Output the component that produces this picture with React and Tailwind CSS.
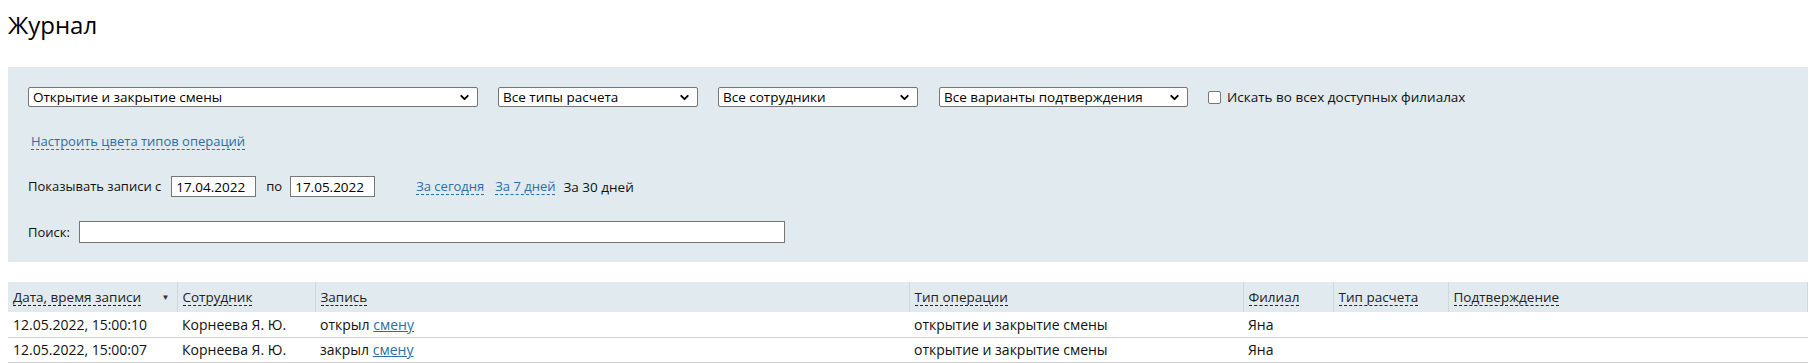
import { ChevronDown } from 'lucide-react'

const FONT = { fontFamily: '"Open Sans", "Noto Sans", sans-serif' }

const COLUMNS = [
  { title: 'Дата, время записи', width: 'w-[169px]', sort: true },
  { title: 'Сотрудник', width: 'w-[138px]' },
  { title: 'Запись', width: 'w-[594px]' },
  { title: 'Тип операции', width: 'w-[334px]' },
  { title: 'Филиал', width: 'w-[90px]' },
  { title: 'Тип расчета', width: 'w-[115px]' },
  { title: 'Подтверждение', width: '' },
]

const ROWS = [
  { date: '12.05.2022, 15:00:10', user: 'Корнеева Я. Ю.', action: 'открыл', type: 'открытие и закрытие смены', branch: 'Яна' },
  { date: '12.05.2022, 15:00:07', user: 'Корнеева Я. Ю.', action: 'закрыл', type: 'открытие и закрытие смены', branch: 'Яна' },
]

const DASH_LINK = 'cursor-pointer border-b border-dashed border-[#2c6ea8] text-[13px] text-[#2c6ea8] leading-[15px]'

function FakeSelect({ label, className }) {
  return (
    <div
      className={`${className} flex h-[20px] shrink-0 items-center justify-between rounded-[2px] border border-[#767676] bg-white pl-[4px] pr-[6px] text-black`}
    >
      <span className="truncate">{label}</span>
      <ChevronDown size={13} strokeWidth={3.5} className="text-black" />
    </div>
  )
}

function DateInput({ value }) {
  return (
    <div className="flex h-[21px] w-[85px] shrink-0 items-center border border-[#767676] bg-white px-[4px] text-[13.5px] text-black">
      {value}
    </div>
  )
}

export default function App() {
  return (
    <div className="min-h-[363px] bg-white pl-[8px] text-[13.5px] text-[#111]" style={FONT}>
      <h1 className="pt-[9px] text-[24px] font-normal leading-[32px] text-black">Журнал</h1>

      <section className="mt-[26px] h-[195px] w-[1800px] bg-[#e1eaee] pl-[20px] pt-[20px]">
        <div className="flex items-center">
          <FakeSelect label="Открытие и закрытие смены" className="w-[450px]" />
          <FakeSelect label="Все типы расчета" className="ml-[20px] w-[200px]" />
          <FakeSelect label="Все сотрудники" className="ml-[20px] w-[200px]" />
          <FakeSelect label="Все варианты подтверждения" className="ml-[21px] w-[249px]" />
          <label className="ml-[20px] flex items-center gap-[6px]">
            <span className="h-[13px] w-[13px] rounded-[2px] border border-[#767676] bg-white" />
            <span>Искать во всех доступных филиалах</span>
          </label>
        </div>

        <div className="mt-[25px] flex h-[20px] items-center pl-[3px]">
          <span className={DASH_LINK}>Настроить цвета типов операций</span>
        </div>

        <div className="mt-[24px] flex items-center text-[13px]">
          <span>Показывать записи с</span>
          <div className="ml-[10px]"><DateInput value="17.04.2022" /></div>
          <span className="ml-[10px]">по</span>
          <div className="ml-[8px]"><DateInput value="17.05.2022" /></div>
          <span className={`ml-[41px] ${DASH_LINK}`}>За сегодня</span>
          <span className={`ml-[11px] ${DASH_LINK}`}>За 7 дней</span>
          <span className="ml-[8px] text-[13.5px]">За 30 дней</span>
        </div>

        <div className="mt-[24px] flex items-center text-[13px]">
          <span>Поиск:</span>
          <div className="ml-[9px] h-[22px] w-[706px] border border-[#767676] bg-white" />
        </div>
      </section>

      <table className="mt-[20px] w-[1800px] table-fixed border-collapse">
        <thead>
          <tr className="h-[30px] bg-[#e1eaee]">
            {COLUMNS.map((col, i) => (
              <th
                key={col.title}
                className={`${col.width} px-[5px] text-left align-middle text-[13.5px] font-normal ${i > 0 ? 'border-l border-[#cfd8dc]' : ''} ${i === COLUMNS.length - 1 ? 'border-r border-[#cfd8dc]' : ''}`}
              >
                <div className="flex items-center justify-between">
                  <span className="border-b border-dashed border-[#222] leading-[16px] text-[#222]">{col.title}</span>
                  {col.sort && <span className="pr-[2px] text-[8px] leading-none text-[#333]">▼</span>}
                </div>
              </th>
            ))}
          </tr>
        </thead>
        <tbody className="text-[14px]">
          {ROWS.map((row) => (
            <tr key={row.date} className="h-[25px] border-b border-[#d0d0d0]">
              <td className="px-[5px]">{row.date}</td>
              <td className="px-[5px]">{row.user}</td>
              <td className="px-[5px]">
                {row.action}{' '}
                <span className="cursor-pointer text-[#2c6ea8] underline">смену</span>
              </td>
              <td className="px-[5px]">{row.type}</td>
              <td className="px-[5px]">{row.branch}</td>
              <td className="px-[5px]" />
              <td className="px-[5px]" />
            </tr>
          ))}
        </tbody>
      </table>
    </div>
  )
}
